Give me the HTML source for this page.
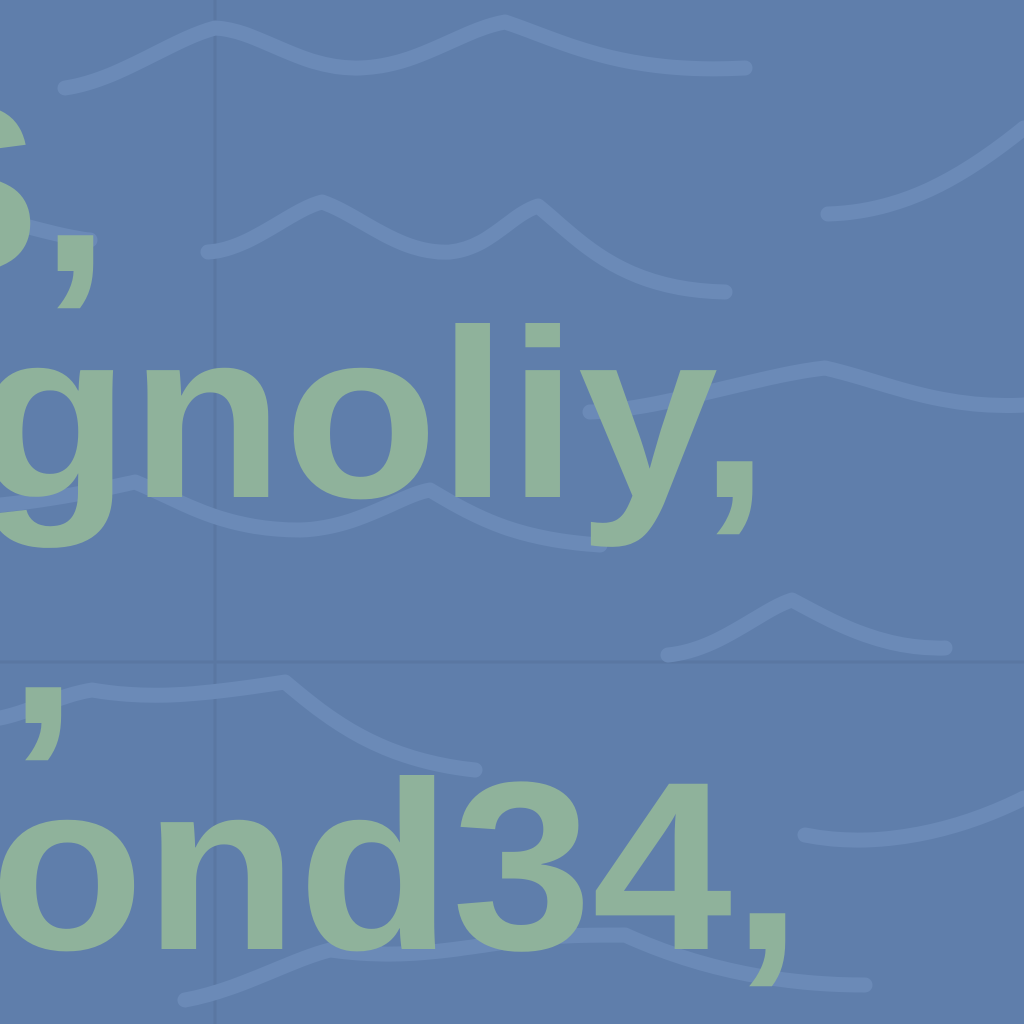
<!DOCTYPE html>
<html><head><style>
html,body{margin:0;padding:0}
body{width:1024px;height:1024px;overflow:hidden;background:#5f7eab;position:relative;font-family:"Liberation Sans",sans-serif}
#w{position:absolute;left:0;top:0;width:1024px;height:1024px;overflow:hidden}
svg{position:absolute;left:0;top:0}
.t{position:absolute;font-weight:bold;font-size:252px;color:#8fb29b;line-height:1;white-space:nowrap;transform:scaleY(0.953);transform-origin:0 0}
</style></head><body><div id="w">
<svg width="1024" height="1024" viewBox="0 0 1024 1024">
<g stroke="#5a77a2" stroke-width="3" fill="none">
<line x1="215" y1="0" x2="215" y2="1024"/>
<line x1="0" y1="662" x2="1024" y2="662"/>
</g>
<g stroke="#6b8ab7" stroke-width="15" fill="none" stroke-linecap="round" stroke-linejoin="round">
<path d="M65 88 C120 80 170 40 215 28 C260 30 300 70 360 68 C420 66 460 30 505 22 C560 40 620 75 745 68"/>
<path d="M828 214 C900 212 960 180 1024 128"/>
<path d="M208 252 C250 250 290 210 322 202 C360 215 400 255 450 252 C490 248 510 215 538 206 C580 240 620 290 725 292"/>
<path d="M590 412 C660 410 760 375 825 368 C880 380 940 410 1024 405"/>
<path d="M0 505 C50 500 100 490 135 482 C180 500 220 530 300 530 C360 528 400 495 430 490 C480 520 520 540 600 545"/>
<path d="M668 655 C720 650 760 610 792 600 C830 620 880 650 945 648"/>
<path d="M0 718 C30 712 60 695 92 690 C150 700 200 695 285 682 C330 720 380 760 475 770"/>
<path d="M805 835 C880 850 960 830 1024 798"/>
<path d="M185 1000 C240 990 290 960 330 950 C400 960 450 950 520 940 C560 935 590 935 625 935 C680 960 760 985 865 985"/>
<path d="M10 222 C40 230 70 238 90 240"/>
</g>
</svg>
<div class="t" style="left:-128px;top:69px">S,</div>
<div class="t" style="left:-24px;top:295px">gnoliy,</div>
<div class="t" style="left:8px;top:521px">,</div>
<div class="t" style="left:-10px;top:747px">ond34,</div>
</div></body></html>
